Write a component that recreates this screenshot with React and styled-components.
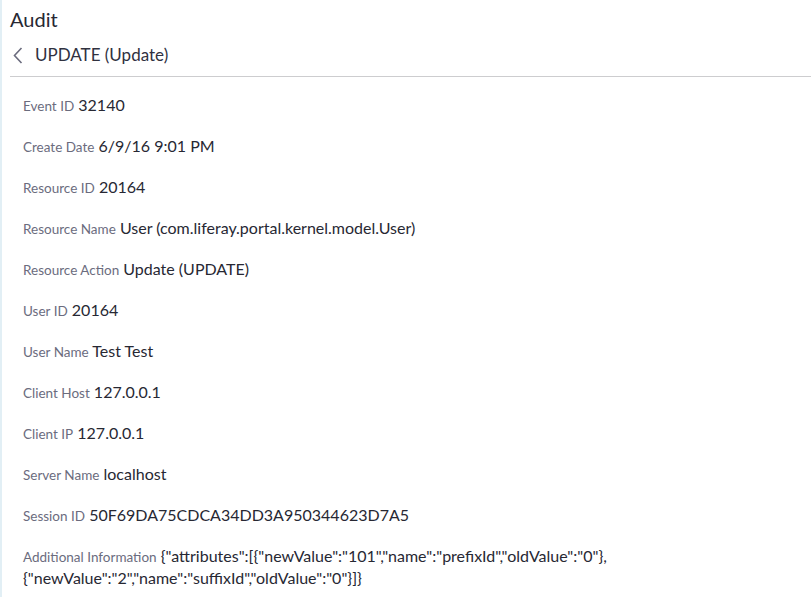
import styled, { createGlobalStyle } from 'styled-components';

const GlobalStyle = createGlobalStyle`
  body {
    margin: 0;
    background: #fff;
    font-family: Lato, "Liberation Sans", sans-serif;
  }
`;

const rows = [
  ['Event ID', '32140'],
  ['Create Date', '6/9/16 9:01 PM'],
  ['Resource ID', '20164'],
  ['Resource Name', 'User (com.liferay.portal.kernel.model.User)'],
  ['Resource Action', 'Update (UPDATE)'],
  ['User ID', '20164'],
  ['User Name', 'Test Test'],
  ['Client Host', '127.0.0.1'],
  ['Client IP', '127.0.0.1'],
  ['Server Name', 'localhost'],
  ['Session ID', '50F69DA75CDCA34DD3A950344623D7A5'],
];

export default () => (
  <Page>
    <GlobalStyle />
    <Header>
      <Title>Audit</Title>
      <SubHeader>
        <Back aria-label="back">
          <svg width="10" height="17" viewBox="0 0 10 17" fill="none">
            <path d="M8.5 1 L1.5 8.5 L8.5 16" stroke="#6b6c7e" strokeWidth="1.6" />
          </svg>
        </Back>
        <SubTitle>UPDATE (Update)</SubTitle>
      </SubHeader>
    </Header>
    <Details>
      {rows.map(([label, value]) => (
        <Row key={label}>
          <Label>{label}</Label> <Value>{value}</Value>
        </Row>
      ))}
      <Row>
        <Label>Additional Information</Label>{' '}
        <Value>
          {'{"attributes":[{"newValue":"101","name":"prefixId","oldValue":"0"},'}
          <wbr />
          {'{"newValue":"2","name":"suffixId","oldValue":"0"}]}'}
        </Value>
      </Row>
    </Details>
  </Page>
);

const Page = styled.div`
  min-height: 597px;
  box-sizing: border-box;
  border-left: 2px solid #e2eff5;
`;

const Header = styled.div`
  margin-left: 8px;
  padding-top: 7px;
  padding-bottom: 9px;
  border-bottom: 1px solid #cdcdcf;
`;

const Title = styled.h1`
  margin: 0 0 12px;
  font-size: 20px;
  line-height: 24px;
  font-weight: 400;
  color: #272833;
`;

const SubHeader = styled.div`
  display: flex;
  align-items: center;
  height: 24px;
`;

const Back = styled.span`
  display: flex;
  width: 25px;
  padding-left: 3px;
  box-sizing: border-box;
`;

const SubTitle = styled.h2`
  margin: 0;
  font-size: 17px;
  line-height: 24px;
  font-weight: 400;
  color: #30313f;
`;

const Details = styled.div`
  display: flex;
  flex-direction: column;
  gap: 19px;
  padding: 17px 10px 0 21px;
`;

const Row = styled.div`
  font-size: 16px;
  line-height: 22px;
`;

const Label = styled.span`
  font-size: 13.5px;
  line-height: 1;
  color: #6b6c7e;
`;

const Value = styled.span`
  color: #272833;
`;
